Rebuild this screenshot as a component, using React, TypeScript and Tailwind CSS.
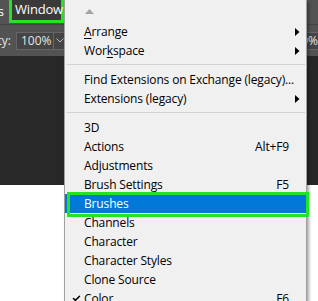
import { Check } from "lucide-react";

type MenuRow =
  | { kind: "item"; label: string; mnemonic?: number; shortcut?: string; submenu?: boolean; checked?: boolean; active?: boolean }
  | { kind: "sep" };

const rows: MenuRow[] = [
  { kind: "item", label: "Arrange", mnemonic: 0, submenu: true },
  { kind: "item", label: "Workspace", mnemonic: 3, submenu: true },
  { kind: "sep" },
  { kind: "item", label: "Find Extensions on Exchange (legacy)..." },
  { kind: "item", label: "Extensions (legacy)", submenu: true },
  { kind: "sep" },
  { kind: "item", label: "3D" },
  { kind: "item", label: "Actions", shortcut: "Alt+F9" },
  { kind: "item", label: "Adjustments" },
  { kind: "item", label: "Brush Settings", shortcut: "F5" },
  { kind: "item", label: "Brushes", active: true },
  { kind: "item", label: "Channels" },
  { kind: "item", label: "Character" },
  { kind: "item", label: "Character Styles" },
  { kind: "item", label: "Clone Source" },
  { kind: "item", label: "Color", shortcut: "F6", checked: true },
];

function Label({ text, mnemonic }: { text: string; mnemonic?: number }) {
  if (mnemonic === undefined) return <>{text}</>;
  return (
    <>
      {text.slice(0, mnemonic)}
      <span className="underline underline-offset-2">{text[mnemonic]}</span>
      {text.slice(mnemonic + 1)}
    </>
  );
}

function WindowMenu() {
  return (
    <div className="absolute left-[64px] top-0 w-[243px] border-x border-[#a0a0a0] bg-[#f0f0f0] pb-4 text-[12px] tracking-[-0.15px] text-black shadow-[2px_2px_3px_rgba(0,0,0,0.35)]">
      <div className="flex h-[22px] items-start pl-[20px] pt-[9px]">
        <svg width="9" height="5" viewBox="0 0 9 5">
          <path d="M4.5 0 9 5H0z" fill="#a3a3a3" />
        </svg>
      </div>
      {rows.map((row, i) =>
        row.kind === "sep" ? (
          <div className="h-[10px] pt-[4px]" key={i}>
            <div className="ml-[2px] mr-px h-px bg-[#d2d2d2]" />
          </div>
        ) : (
          <div
            className={`flex h-[19px] items-center ${row.active ? "bg-[#0078d7] text-white" : ""}`}
            key={i}
          >
            <span className="flex w-[19px] shrink-0 pl-[7px]">
              {row.checked ? <Check className="h-[9px] w-[9px]" strokeWidth={4} /> : null}
            </span>
            <span className="flex-1 whitespace-nowrap">
              <Label text={row.label} mnemonic={row.mnemonic} />
            </span>
            {row.shortcut ? <span className="whitespace-nowrap">{row.shortcut}</span> : null}
            <span className="flex w-[17px] shrink-0 pl-[6px]">
              {row.submenu ? (
                <svg width="5" height="8" viewBox="0 0 5 8">
                  <path d="M0 0 4.5 4 0 8z" fill="#000" />
                </svg>
              ) : null}
            </span>
          </div>
        ),
      )}
    </div>
  );
}

export default function App() {
  return (
    <div className="relative flex h-[301px] w-[318px] flex-col overflow-hidden bg-white font-['Open_Sans',sans-serif]">
      <div className="flex h-[24px] shrink-0 items-start bg-[#535353] text-[13px] text-white">
        <div className="flex h-[23px] w-[4px] items-center justify-end overflow-hidden">
          <span className="whitespace-nowrap">Plugins</span>
        </div>
        <div className="ml-[5px] flex h-[23px] w-[55px] items-center border-[3px] border-t-0 border-[#22e422] bg-[#3a3a3a] pl-[3px] tracking-[-0.2px]">
          Window
        </div>
      </div>
      <div className="flex h-[32px] shrink-0 items-center border-t border-[#434343] bg-[#535353] text-[12px] text-[#e6e6e6]">
        <div className="flex w-[11px] justify-end overflow-hidden">
          <span className="whitespace-nowrap">Opacity:</span>
        </div>
        <div className="ml-[5px] flex h-[18px] items-center border border-[#666666] bg-[#454545]">
          <span className="w-[36px] pl-[4px]">100%</span>
          <span className="flex h-full w-[12px] items-center justify-center border-l border-[#666666]">
            <svg width="8" height="5" viewBox="0 0 8 5">
              <path d="M0.5 0.5 4 4 7.5 0.5" fill="none" stroke="#bdbdbd" />
            </svg>
          </span>
        </div>
        <div className="-mr-[6px] ml-auto flex h-[18px] w-[40px] items-center justify-end border border-[#666666] bg-[#454545] pr-[5px]">
          100%
        </div>
      </div>
      <div className="h-[129px] shrink-0 bg-[#282828]" />
      <div className="flex-1 bg-white" />
      <WindowMenu />
      <div className="absolute left-[67px] top-[192px] h-[25px] w-[242px] border-[3px] border-[#22e422]" />
    </div>
  );
}
